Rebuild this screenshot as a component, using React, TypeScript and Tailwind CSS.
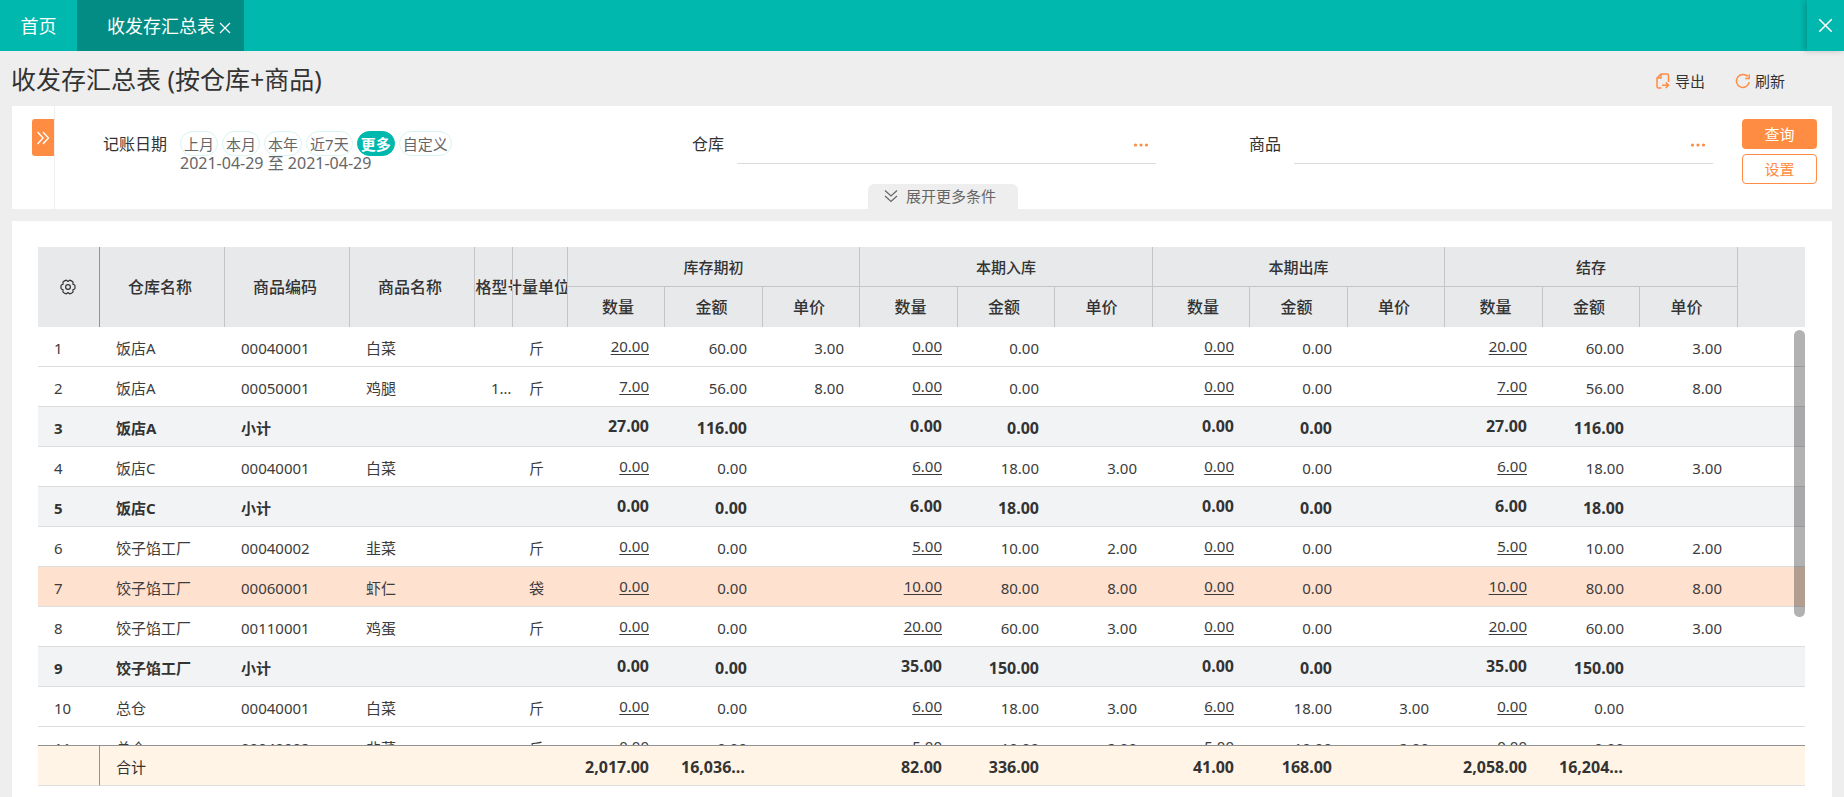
import { useState } from 'react';

type Row = {
  id: number;
  store: string;
  code: string;
  name?: string;
  spec?: string;
  unit?: string;
  values: string[];
  subtotal?: boolean;
};

const GROUPS = ['库存期初', '本期入库', '本期出库', '结存'];
const PERIODS = ['上月', '本月', '本年', '近7天', '更多', '自定义'];

const ROWS: Row[] = [
  { id: 1, store: '饭店A', code: '00040001', name: '白菜', unit: '斤', values: ['20.00', '60.00', '3.00', '0.00', '0.00', '', '0.00', '0.00', '', '20.00', '60.00', '3.00'] },
  { id: 2, store: '饭店A', code: '00050001', name: '鸡腿', spec: '1000g', unit: '斤', values: ['7.00', '56.00', '8.00', '0.00', '0.00', '', '0.00', '0.00', '', '7.00', '56.00', '8.00'] },
  { id: 3, store: '饭店A', code: '小计', subtotal: true, values: ['27.00', '116.00', '', '0.00', '0.00', '', '0.00', '0.00', '', '27.00', '116.00', ''] },
  { id: 4, store: '饭店C', code: '00040001', name: '白菜', unit: '斤', values: ['0.00', '0.00', '', '6.00', '18.00', '3.00', '0.00', '0.00', '', '6.00', '18.00', '3.00'] },
  { id: 5, store: '饭店C', code: '小计', subtotal: true, values: ['0.00', '0.00', '', '6.00', '18.00', '', '0.00', '0.00', '', '6.00', '18.00', ''] },
  { id: 6, store: '饺子馅工厂', code: '00040002', name: '韭菜', unit: '斤', values: ['0.00', '0.00', '', '5.00', '10.00', '2.00', '0.00', '0.00', '', '5.00', '10.00', '2.00'] },
  { id: 7, store: '饺子馅工厂', code: '00060001', name: '虾仁', unit: '袋', values: ['0.00', '0.00', '', '10.00', '80.00', '8.00', '0.00', '0.00', '', '10.00', '80.00', '8.00'] },
  { id: 8, store: '饺子馅工厂', code: '00110001', name: '鸡蛋', unit: '斤', values: ['0.00', '0.00', '', '20.00', '60.00', '3.00', '0.00', '0.00', '', '20.00', '60.00', '3.00'] },
  { id: 9, store: '饺子馅工厂', code: '小计', subtotal: true, values: ['0.00', '0.00', '', '35.00', '150.00', '', '0.00', '0.00', '', '35.00', '150.00', ''] },
  { id: 10, store: '总仓', code: '00040001', name: '白菜', unit: '斤', values: ['0.00', '0.00', '', '6.00', '18.00', '3.00', '6.00', '18.00', '3.00', '0.00', '0.00', ''] },
  { id: 11, store: '总仓', code: '00040002', name: '韭菜', unit: '斤', values: ['0.00', '0.00', '', '5.00', '10.00', '2.00', '5.00', '10.00', '2.00', '0.00', '0.00', ''] },
];

const TOTALS = ['2,017.00', '16,036.00', '', '82.00', '336.00', '', '41.00', '168.00', '', '2,058.00', '16,204.00', ''];

// 表头、表体、合计三个表格共用列宽
function Columns() {
  return (
    <colgroup>
      <col className="w-[62px]" />
      <col className="w-[125px]" />
      <col className="w-[125px]" />
      <col className="w-[125px]" />
      <col className="w-[38px]" />
      <col className="w-[55px]" />
      {GROUPS.map((g, i) => [
        <col key={g + '1'} className={i % 2 ? 'w-[98px]' : 'w-[97px]'} />,
        <col key={g + '2'} className={i % 2 ? 'w-[97px]' : 'w-[98px]'} />,
        <col key={g + '3'} className={i % 2 ? 'w-[98px]' : 'w-[97px]'} />,
      ])}
      <col />
    </colgroup>
  );
}

function HeadCell({ text }: { text: string }) {
  return (
    <th rowSpan={2} className="border-r border-[#c3c5c8] p-0 text-base font-medium">
      <div className="flex justify-center overflow-hidden pr-1 whitespace-nowrap">
        <span className="shrink-0">{text}</span>
      </div>
    </th>
  );
}

function CloseIcon({ className }: { className: string }) {
  return (
    <svg className={className} viewBox="0 0 12 12" fill="none" stroke="currentColor" strokeWidth="1.2">
      <path d="M1 1l10 10M11 1L1 11" />
    </svg>
  );
}

function ExportIcon() {
  return (
    <svg className="h-4 w-4 text-[#ff8c43]" viewBox="0 0 16 16" fill="none" stroke="currentColor" strokeWidth="1.5">
      <path d="M13.500 9V2.500Q13.500 1 12 1H6L2 5v8.500Q2 15 3.500 15H6.500" />
      <path d="M6 1v4H2" />
      <path d="M7 12.300h6.500M10.800 9.600l2.700 2.700-2.700 2.700" />
    </svg>
  );
}

function RefreshIcon() {
  return (
    <svg className="h-4 w-4 text-[#ff8c43]" viewBox="0 0 16 16" fill="none" stroke="currentColor" strokeWidth="1.5">
      <path d="M14.300 9.200A6.500 6.500 0 1 1 12.800 3.600" />
      <path d="M14.200 1.500v3.900h-3.900" />
    </svg>
  );
}

function GearIcon() {
  return (
    <svg className="h-4 w-4" viewBox="0 0 16 16" fill="none" stroke="currentColor" strokeWidth="1.2" strokeLinejoin="round">
      <path d="M14.700 5.950Q15.400 8 14.700 10.050L12.900 10.800 13.100 12.800Q11.700 14.400 9.600 14.800L8 13.600 6.400 14.800Q4.300 14.400 2.900 12.800L3.100 10.800 1.300 10.050Q.6 8 1.300 5.950L3.100 5.200 2.900 3.200Q4.300 1.600 6.400 1.200L8 2.400 9.600 1.200Q11.700 1.600 13.100 3.200L12.900 5.200z" />
      <circle cx="8" cy="8" r="2.400" />
    </svg>
  );
}

function PickerField({ id, label }: { id: string; label: string }) {
  return (
    <div className="flex min-w-0 flex-1 pr-[13px]">
      <label htmlFor={id} className="w-[125px] pt-[14px] pr-[13px] text-right text-base leading-6">
        {label}
      </label>
      <div className="flex h-[46px] flex-1 items-center border-b border-[#dcdcdc] pt-2 pr-[7px]">
        <input id={id} className="min-w-0 flex-1 bg-transparent outline-none" />
        <button type="button" aria-label={`选择${label}`} className="text-[#ff8c43]">
          <svg className="h-4 w-4" viewBox="0 0 16 16" fill="currentColor">
            <circle cx="2.500" cy="8" r="1.600" />
            <circle cx="8" cy="8" r="1.600" />
            <circle cx="13.500" cy="8" r="1.600" />
          </svg>
        </button>
      </div>
    </div>
  );
}

export default function App() {
  const [period, setPeriod] = useState('更多');
  const [activeRow, setActiveRow] = useState(7);

  return (
    <div className="flex h-screen flex-col overflow-hidden bg-[#eeeeee] font-['Noto_Sans','Noto_Sans_CJK_SC',sans-serif] text-[15px] leading-5 text-[#333333]">
      {/* 顶部页签 */}
      <nav className="flex h-[51px] shrink-0 bg-[#00b8ad] text-lg text-white">
        <button type="button" className="w-[77px]">首页</button>
        <div className="flex w-[167px] items-center justify-end gap-1 bg-[#028c83] pr-[13px]">
          <button type="button">收发存汇总表</button>
          <button type="button" aria-label="关闭页签" className="pt-1">
            <CloseIcon className="h-3 w-3" />
          </button>
        </div>
        <button type="button" aria-label="关闭" className="ml-auto flex w-[37px] items-center justify-center shadow-[-2px_0_6px_rgba(0,0,0,0.2)]">
          <CloseIcon className="h-[15px] w-[15px]" />
        </button>
      </nav>

      <header className="flex h-[55px] shrink-0 items-center justify-between pr-[59px] pl-[11px]">
        <h1 className="text-[25px] leading-8">收发存汇总表 (按仓库+商品)</h1>
        <div className="flex gap-[30px] pt-1">
          <button type="button" className="flex items-center gap-1">
            <ExportIcon />
            导出
          </button>
          <button type="button" className="flex items-center gap-1">
            <RefreshIcon />
            刷新
          </button>
        </div>
      </header>

      {/* 查询条件 */}
      <section className="relative mx-3 flex h-[103px] shrink-0 bg-white">
        <div className="flex w-[43px] justify-end border-r border-[#eeeeee] pt-[13px]">
          <button type="button" aria-label="展开侧栏" className="flex h-[37px] w-[22px] items-center justify-center rounded-l-[3px] bg-[#ff8c43] text-white">
            <svg className="h-[14px] w-[14px]" viewBox="0 0 14 14" fill="none" stroke="currentColor" strokeWidth="1.4">
              <path d="M1.500 1l5.500 6-5.500 6M7 1l5.500 6L7 13" />
            </svg>
          </button>
        </div>
        <form className="flex flex-1 pt-3" onSubmit={(e) => e.preventDefault()}>
          <div className="flex min-w-0 flex-1 pr-[13px]">
            <span className="w-[125px] pt-[14px] pr-[13px] text-right text-base leading-6">记账日期</span>
            <div className="flex-1 pt-[13px] text-[#666666]">
              <div className="flex gap-1">
                {PERIODS.map((p) => (
                  <button
                    key={p}
                    type="button"
                    onClick={() => setPeriod(p)}
                    className={
                      p === period
                        ? 'h-[25px] rounded-full border border-[#00b8ad] bg-[#00b8ad] px-[3px] font-bold text-white'
                        : 'h-[25px] rounded-full border border-[#d9f4f2] px-[3px]'
                    }
                  >
                    {p}
                  </button>
                ))}
              </div>
              <p className="text-base leading-[14px]">2021-04-29 至 2021-04-29</p>
            </div>
          </div>
          <PickerField id="store" label="仓库" />
          <PickerField id="goods" label="商品" />
          <div className="flex w-[106px] flex-col gap-[5px] pt-px pr-[15px] pl-4">
            <button type="submit" className="h-[30px] rounded bg-[#ff8c43] text-white">查询</button>
            <button type="button" className="h-[30px] rounded border border-[#ff8c43] text-[#ff8c43]">设置</button>
          </div>
        </form>
        <button
          type="button"
          className="absolute bottom-0 left-1/2 -ml-[54px] flex h-[25px] w-[150px] items-center gap-2 rounded-t-md bg-[#eeeeee] pb-0.5 pl-4 text-[#666666]"
        >
          <svg className="h-[14px] w-[14px]" viewBox="0 0 14 14" fill="none" stroke="currentColor" strokeWidth="1.2">
            <path d="M1 1.500L7 7l6-5.500M1 7l6 5.500L13 7" />
          </svg>
          展开更多条件
        </button>
      </section>

      {/* 汇总表 */}
      <main className="mx-3 mt-3 flex-1 bg-white pt-[26px] pr-[27px] pl-[26px]">
        <table className="w-full table-fixed border-separate border-spacing-0 bg-[#e7e9eb]">
          <Columns />
          <thead>
            <tr className="h-10">
              <th rowSpan={2} className="border-r border-[#909295] p-0 pr-px">
                <button type="button" aria-label="列设置" className="block w-full">
                  <span className="flex justify-center">
                    <GearIcon />
                  </span>
                </button>
              </th>
              <HeadCell text="仓库名称" />
              <HeadCell text="商品编码" />
              <HeadCell text="商品名称" />
              <HeadCell text="规格型号" />
              <HeadCell text="计量单位" />
              {GROUPS.map((g) => (
                <th key={g} colSpan={3} className="border-r border-b border-[#c3c5c8] p-0 font-medium">
                  {g}
                </th>
              ))}
              <th rowSpan={2} />
            </tr>
            <tr className="h-10">
              {GROUPS.map((g) => [
                <th key={g + '1'} className="border-r border-[#c3c5c8] p-0 pl-1 text-base font-medium">数量</th>,
                <th key={g + '2'} className="border-r border-[#c3c5c8] p-0 pr-1 text-base font-medium">金额</th>,
                <th key={g + '3'} className="border-r border-[#c3c5c8] p-0 pr-1 text-base font-medium">单价</th>,
              ])}
            </tr>
          </thead>
        </table>

        <div className="relative h-[418px] overflow-hidden">
          <table className="w-full table-fixed border-separate border-spacing-0 text-[#3c3c3c]">
            <Columns />
            <tbody>
              {ROWS.map((row) => (
                <tr
                  key={row.id}
                  onClick={() => setActiveRow(row.id)}
                  className={
                    row.subtotal
                      ? 'h-10 bg-[#f2f3f5] font-bold text-[#333333] [&>td]:border-b [&>td]:border-[#dcdee0]'
                      : row.id === activeRow
                        ? 'h-10 bg-[#ffe1d0] [&>td]:border-b [&>td]:border-[#dcdee0]'
                        : 'h-10 [&>td]:border-b [&>td]:border-[#dcdee0]'
                  }
                >
                  <td className="p-0 pt-0.5 pl-4">{row.id}</td>
                  <td className="p-0 pt-0.5 pl-4">{row.store}</td>
                  <td className="p-0 pt-0.5 pl-4">{row.code}</td>
                  <td className="p-0 pt-0.5 pl-4">{row.name}</td>
                  <td className="truncate p-0 pt-0.5 pl-4">{row.spec}</td>
                  <td className="p-0 pt-0.5 pl-4">{row.unit}</td>
                  {row.values.map((v, i) => {
                    if (row.subtotal) {
                      return (
                        <td key={i} className={i % 3 === 0 ? 'p-0 pr-4 pb-0.5 text-right text-base leading-5' : 'p-0 pt-0.5 pr-4 text-right text-base leading-5'}>
                          {v}
                        </td>
                      );
                    }
                    return i % 3 === 0 ? (
                      <td key={i} className="p-0 pr-4 pb-0.5 text-right">
                        <a href="#detail" className="underline underline-offset-2">{v}</a>
                      </td>
                    ) : (
                      <td key={i} className="p-0 pt-0.5 pr-4 text-right">{v}</td>
                    );
                  })}
                  <td />
                </tr>
              ))}
            </tbody>
          </table>
          <div className="absolute top-[3px] right-0 h-[287px] w-[11px] rounded-full bg-black/30" />
        </div>

        <table className="w-full table-fixed border-separate border-spacing-0 border-t border-[#909295] bg-[#fff4e5]">
          <Columns />
          <tbody>
            <tr className="h-10 font-bold [&>td]:border-b [&>td]:border-b-[#dcdee0]">
              <td className="border-r border-r-[#909295] p-0" />
              <td className="p-0 pt-0.5 pl-4 font-normal">合计</td>
              <td />
              <td />
              <td />
              <td />
              {TOTALS.map((v, i) => (
                <td key={i} className="truncate p-0 pt-0.5 pr-4 pl-4 text-right text-base leading-5">{v}</td>
              ))}
              <td />
            </tr>
          </tbody>
        </table>
      </main>
    </div>
  );
}
